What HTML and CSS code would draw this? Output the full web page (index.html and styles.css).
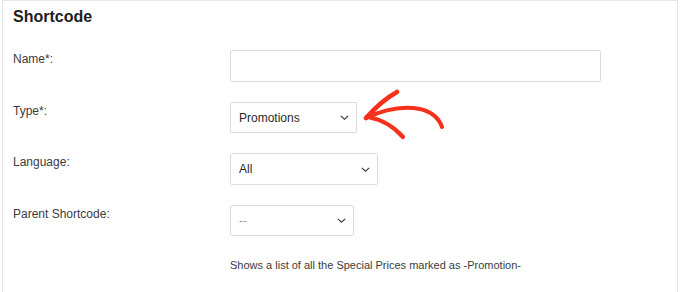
FILE: index.html
```
<!DOCTYPE html>
<html lang="en">
<head>
<meta charset="utf-8">
<title>Shortcode</title>
<link rel="stylesheet" href="styles.css">
</head>
<body>
<div class="panel">
  <h2 class="title">Shortcode</h2>
  <div class="form">
    <div class="label">Name*:</div>
    <div class="field"><div class="input name"></div></div>

    <div class="label">Type*:</div>
    <div class="field"><div class="input select type"><span>Promotions</span><svg class="chev" width="9" height="5" viewBox="0 0 9 5"><path d="M0.8 0.8 L4.5 4.2 L8.2 0.8" fill="none" stroke="#3a3a3a" stroke-width="1.1"/></svg></div></div>

    <div class="label">Language:</div>
    <div class="field"><div class="input select lang"><span>All</span><svg class="chev" width="9" height="5" viewBox="0 0 9 5"><path d="M0.8 0.8 L4.5 4.2 L8.2 0.8" fill="none" stroke="#3a3a3a" stroke-width="1.1"/></svg></div></div>

    <div class="label">Parent Shortcode:</div>
    <div class="field"><div class="input select parent"><span class="muted">--</span><svg class="chev" width="9" height="5" viewBox="0 0 9 5"><path d="M0.8 0.8 L4.5 4.2 L8.2 0.8" fill="none" stroke="#3a3a3a" stroke-width="1.1"/></svg></div></div>

    <div class="label"></div>
    <div class="field desc">Shows a list of all the Special Prices marked as -Promotion-</div>
  </div>
</div>
<svg class="arrow" width="680" height="292" viewBox="0 0 680 292">
  <g fill="none" stroke="#f5311b" stroke-linecap="round" stroke-linejoin="round">
    <path d="M366 118 Q 395 104 420 109 Q 437 113 442 127" stroke-width="4"/>
    <path d="M366 118 Q 381 101 397 92" stroke-width="4.8"/>
    <path d="M368 117 Q 389 121 403 137" stroke-width="4.2"/>
  </g>
</svg>
</body>
</html>
```
FILE: styles.css
```
html, body {
  margin: 0;
  padding: 0;
  background: #ffffff;
}
body {
  font-family: "Liberation Sans", Arial, sans-serif;
  color: #3a3a3a;
  width: 680px;
  height: 292px;
  overflow: hidden;
  position: relative;
}
.panel {
  margin-left: 2px;
  width: 676px;
  height: 292px;
  border: 1px solid #e6e6e6;
  border-bottom: none;
  padding: 6px 0 0 10px;
  box-sizing: border-box;
}
.title {
  margin: 0;
  font-size: 16px;
  line-height: 20px;
  font-weight: 700;
  color: #1e1e1e;
}
.form {
  margin-top: 23px;
  display: grid;
  grid-template-columns: 217px 1fr;
  row-gap: 20px;
}
.label {
  font-size: 12px;
  line-height: 18px;
  color: #3c3c3c;
}
.input {
  height: 32px;
  border: 1px solid #dcdcdc;
  border-radius: 2px;
  box-sizing: border-box;
  background: #fff;
}
.name { width: 371px; }
.select {
  display: flex;
  align-items: center;
  justify-content: space-between;
  padding: 0 7px 0 8px;
  font-size: 12px;
  color: #2a2a2a;
}
.type { width: 127px; height: 31px; }
.lang { width: 148px; }
.parent { width: 124px; height: 31px; }
.muted { color: #9a9a9a; }
.chev { display: block; }
.desc {
  font-size: 11px;
  line-height: 18px;
  color: #3c3c3c;
}
.arrow {
  position: absolute;
  left: 0;
  top: 0;
  pointer-events: none;
}
```
